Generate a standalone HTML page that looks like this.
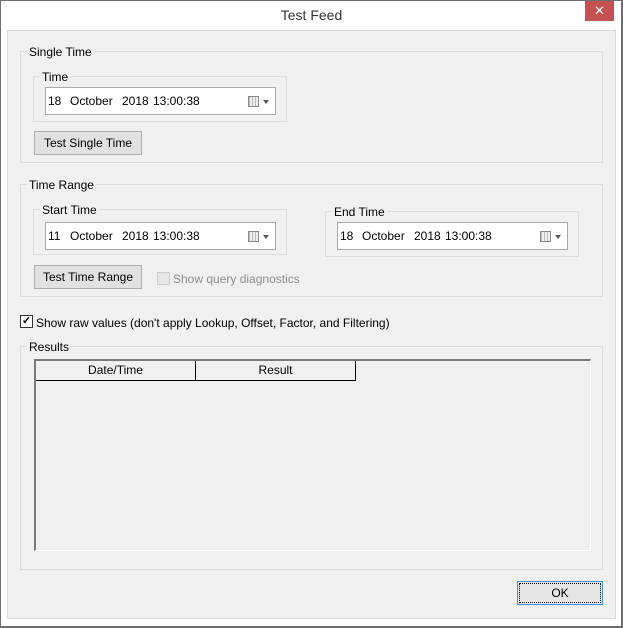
<!DOCTYPE html>
<html><head><style>
*{margin:0;padding:0;box-sizing:border-box}
body{width:623px;height:628px;background:#fff;font-family:"Liberation Sans",sans-serif;font-size:12px;color:#000;position:relative;overflow:hidden}
.a{position:absolute}
.win{left:0;top:0;width:623px;height:628px;border:1px solid #6f6f6f;border-width:1px 2px 2px 1px;background:#fff}
.client{left:7px;top:30px;width:609px;height:589px;background:#f0f0f0;border:1px solid #dadada}
.grp{border:1px solid #dcdcdc}
.lbl{background:#f0f0f0;padding:0 2px;line-height:14px}
.dt{background:#fff;border:1px solid #aaa;height:28px;line-height:26px;white-space:pre}
.dt span{position:absolute;top:0}
.btn{border:1px solid #adadad;background:#e1e1e1;text-align:center;line-height:22px}
.cal{right:16px;top:8px;width:11px;height:11px;border:1px solid #8a8a8a;background:repeating-linear-gradient(90deg,#bbb 0 1px,#eee 1px 3px)}
.arr{right:6px;top:12px;width:0;height:0;border-left:3.5px solid transparent;border-right:3.5px solid transparent;border-top:4px solid #556}
</style></head><body>
<div class="a win"></div>
<div class="a" style="left:0;top:7px;width:623px;text-align:center;font-size:14px;color:#333">Test Feed</div>
<div class="a" style="left:585px;top:1px;width:29px;height:20px;background:#c75050;color:#fff;text-align:center;font-size:13px;line-height:20px">✕</div>
<div class="a client"></div>

<div class="a grp" style="left:20px;top:51px;width:583px;height:112px"></div>
<div class="a lbl" style="left:27px;top:45px">Single Time</div>
<div class="a grp" style="left:33px;top:76px;width:254px;height:46px"></div>
<div class="a lbl" style="left:40px;top:70px">Time</div>
<div class="a dt" style="left:45px;top:87px;width:231px"><span style="left:2px">18</span><span style="left:24px">October</span><span style="left:76px">2018</span><span style="left:107px">13:00:38</span><div class="a cal"></div><div class="a arr"></div></div>
<div class="a btn" style="left:34px;top:131px;width:108px;height:24px">Test Single Time</div>

<div class="a grp" style="left:20px;top:184px;width:583px;height:113px"></div>
<div class="a lbl" style="left:27px;top:178px">Time Range</div>
<div class="a grp" style="left:33px;top:209px;width:254px;height:46px"></div>
<div class="a lbl" style="left:40px;top:203px">Start Time</div>
<div class="a dt" style="left:45px;top:222px;width:231px"><span style="left:2px">11</span><span style="left:24px">October</span><span style="left:76px">2018</span><span style="left:107px">13:00:38</span><div class="a cal"></div><div class="a arr"></div></div>
<div class="a grp" style="left:325px;top:211px;width:254px;height:46px"></div>
<div class="a lbl" style="left:332px;top:205px">End Time</div>
<div class="a dt" style="left:337px;top:222px;width:231px"><span style="left:2px">18</span><span style="left:24px">October</span><span style="left:76px">2018</span><span style="left:107px">13:00:38</span><div class="a cal"></div><div class="a arr"></div></div>
<div class="a btn" style="left:34px;top:265px;width:108px;height:24px">Test Time Range</div>
<div class="a" style="left:157px;top:272px;width:13px;height:13px;border:1px solid #ccc;background:#e6e6e6"></div>
<div class="a" style="left:173px;top:272px;color:#8d8d8d">Show query diagnostics</div>

<div class="a" style="left:20px;top:315px;width:13px;height:13px;border:1px solid #333;background:#fff;font-size:11px;line-height:11px;text-align:center;font-weight:bold">✓</div>
<div class="a" style="left:36px;top:316px">Show raw values (don't apply Lookup, Offset, Factor, and Filtering)</div>

<div class="a grp" style="left:20px;top:346px;width:583px;height:224px"></div>
<div class="a lbl" style="left:27px;top:340px">Results</div>
<div class="a" style="left:34px;top:359px;width:557px;height:192px;border:2px solid #7a7a7a;border-right:1px solid #fff;border-bottom:1px solid #fff;background:#f0f0f0"></div>
<div class="a" style="left:36px;top:361px;width:160px;height:20px;border-bottom:1px solid #000;border-right:1px solid #000;text-align:center;line-height:19px">Date/Time</div>
<div class="a" style="left:196px;top:361px;width:160px;height:20px;border-bottom:1px solid #000;border-right:1px solid #000;text-align:center;line-height:19px">Result</div>

<div class="a" style="left:517px;top:581px;width:86px;height:24px;border:1px solid #3c8fe6;background:#e5e5e5"><div style="position:absolute;left:1px;top:1px;right:1px;bottom:1px;border:1px dotted #000;text-align:center;line-height:18px">OK</div></div>
</body></html>
